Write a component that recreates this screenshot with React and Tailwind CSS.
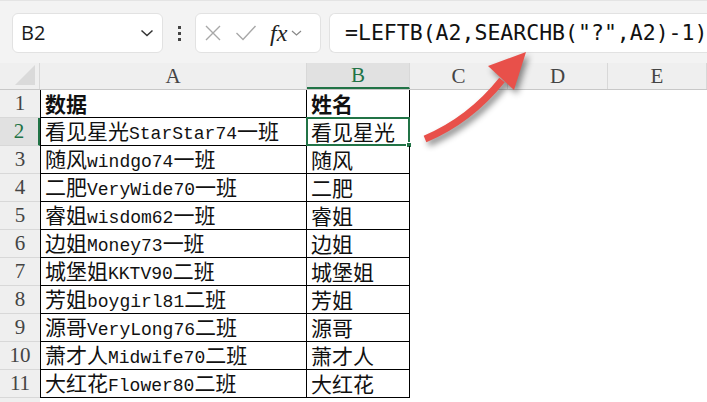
import React from 'react';

const rows = [
  ['数据', '姓名'],
  ['看见星光StarStar74一班', '看见星光'],
  ['随风windgo74一班', '随风'],
  ['二肥VeryWide70一班', '二肥'],
  ['睿姐wisdom62一班', '睿姐'],
  ['边姐Money73一班', '边姐'],
  ['城堡姐KKTV90二班', '城堡姐'],
  ['芳姐boygirl81二班', '芳姐'],
  ['源哥VeryLong76二班', '源哥'],
  ['萧才人Midwife70二班', '萧才人'],
  ['大红花Flower80二班', '大红花'],
];

// latin runs get the narrow mono face, CJK stays full width
function CellText({ text, bold }) {
  const pieces = text.split(/([A-Za-z0-9]+)/).filter(Boolean);
  return (
    <span className={bold ? 'font-bold leading-none' : 'leading-none'}>
      {pieces.map((p, i) =>
        /^[A-Za-z0-9]+$/.test(p) ? (
          <span key={i} className="font-['Liberation_Mono',monospace] text-[18px] leading-none">{p}</span>
        ) : (
          <span key={i} className="font-['Noto_Sans_CJK_SC',sans-serif] text-[21px] leading-none">{p}</span>
        )
      )}
    </span>
  );
}

function FormulaBar() {
  return (
    <div className="h-[63px] bg-[#f3f3f3] flex items-start pt-[12px] pl-[12px] gap-[8px] border-t border-[#e4e4e4]">
      <div className="w-[151px] h-[40px] bg-white border border-[#e2e2e2] rounded-[6px] flex items-center justify-between pl-[8px] pr-[8px]">
        <span className="font-['Open_Sans',sans-serif] text-[20px] text-[#1a1a1a] leading-none">B2</span>
        <svg width="14" height="10" viewBox="0 0 14 10">
          <path d="M1.5 2.5 L7 7.5 L12.5 2.5" fill="none" stroke="#333" strokeWidth="1.5" />
        </svg>
      </div>
      <div className="w-[16px] h-[40px] flex flex-col items-center justify-center gap-[3px]">
        <div className="w-[3px] h-[3px] bg-[#444]"></div>
        <div className="w-[3px] h-[3px] bg-[#444]"></div>
        <div className="w-[3px] h-[3px] bg-[#444]"></div>
      </div>
      <div className="w-[126px] h-[40px] bg-white border border-[#e2e2e2] rounded-[6px] flex items-center pl-[8px] gap-[13px]">
        <svg width="18" height="18" viewBox="0 0 18 18">
          <path d="M2 2 L16 16 M16 2 L2 16" stroke="#a8a8a8" strokeWidth="1.4" />
        </svg>
        <svg width="22" height="18" viewBox="0 0 22 18">
          <path d="M1.5 9 L8 15.5 L20.5 2" fill="none" stroke="#a8a8a8" strokeWidth="1.4" />
        </svg>
        <div className="flex items-center gap-[4px]">
          <span className="font-['Liberation_Serif',serif] italic text-[24px] text-[#222] leading-none">fx</span>
          <svg width="11" height="8" viewBox="0 0 11 8">
            <path d="M1 2 L5.5 6 L10 2" fill="none" stroke="#888" strokeWidth="1.2" />
          </svg>
        </div>
      </div>
      <div className="flex-1 h-[40px] bg-white border border-[#e2e2e2] border-r-0 rounded-l-[6px] flex items-center pl-[15px] overflow-hidden whitespace-nowrap">
        <span className="font-['DejaVu_Sans_Mono',monospace] text-[21.5px] text-[#111] leading-none">=LEFTB(A2,SEARCHB("?",A2)-1)</span>
      </div>
    </div>
  );
}

function HeaderRow() {
  const cols = [
    ['A', 'w-[267px]'],
    ['B', 'w-[103px]'],
    ['C', 'w-[98px]'],
    ['D', 'w-[100px]'],
    ['E', 'flex-1'],
  ];
  return (
    <div className="flex h-[27px] bg-[#efefef] border-b border-[#c8c8c8]">
      <div className="w-[40px] relative border-r border-[#d8d8d8]">
        <svg className="absolute right-[4px] bottom-[4px]" width="20" height="20" viewBox="0 0 20 20">
          <path d="M20 0 L20 20 L0 20 Z" fill="#dadada" />
        </svg>
      </div>
      {cols.map(([c, w]) =>
        c === 'B' ? (
          <div key={c} className={`${w} flex items-center justify-center bg-[#e1e1e1] border-b-2 border-[#217346] border-r border-r-[#d8d8d8] font-['Liberation_Serif',serif] text-[21px] leading-none text-[#217346]`}>
            {c}
          </div>
        ) : (
          <div key={c} className={`${w} flex items-center justify-center border-r border-[#d8d8d8] font-['Liberation_Serif',serif] text-[21px] leading-none text-[#444]`}>
            {c}
          </div>
        )
      )}
    </div>
  );
}

function DataRow({ n, a, b }) {
  const selected = n === 2;
  return (
    <div className="flex h-[28px]">
      <div
        className={
          selected
            ? 'w-[40px] bg-[#e1e1e1] border-b border-[#d8d8d8] border-r-2 border-r-[#217346] flex items-center justify-center font-[\'Liberation_Serif\',serif] text-[21px] leading-none text-[#217346]'
            : 'w-[40px] bg-[#efefef] border-b border-[#d8d8d8] flex items-center justify-center font-[\'Liberation_Serif\',serif] text-[21px] leading-none text-[#444]'
        }
      >
        {n}
      </div>
      <div className="w-[267px] border-l border-r border-b border-black flex items-center pl-[4px] text-[#111] whitespace-nowrap">
        <CellText text={a} bold={n === 1} />
      </div>
      <div className="w-[103px] border-r border-b border-black flex items-center pl-[4px] text-[#111] whitespace-nowrap relative">
        <CellText text={b} bold={n === 1} />
        {selected && (
          <div className="absolute -left-[1px] -top-[1px] -right-[1px] -bottom-[1px] border-2 border-[#217346]">
            <div className="absolute -right-[4px] -bottom-[4px] w-[6px] h-[6px] bg-[#217346] border border-white"></div>
          </div>
        )}
      </div>
      <div className="flex-1"></div>
    </div>
  );
}

export default function App() {
  return (
    <div className="w-[707px] h-[402px] bg-white relative overflow-hidden">
      <FormulaBar />
      <HeaderRow />
      {rows.map(([a, b], i) => (
        <DataRow key={i} n={i + 1} a={a} b={b} />
      ))}
      <div className="flex h-[10px]">
        <div className="w-[40px] bg-[#efefef]"></div>
      </div>
      <svg className="absolute left-0 top-0 pointer-events-none" width="707" height="402" viewBox="0 0 707 402" style={{ filter: 'drop-shadow(3px 4px 3px rgba(0,0,0,0.45))' }}>
        <path d="M425 139 Q470 120 502 80" fill="none" stroke="#e8504a" strokeWidth="7" />
        <path d="M526 52 L488 66 L514 90 Z" fill="#e8504a" />
      </svg>
    </div>
  );
}
